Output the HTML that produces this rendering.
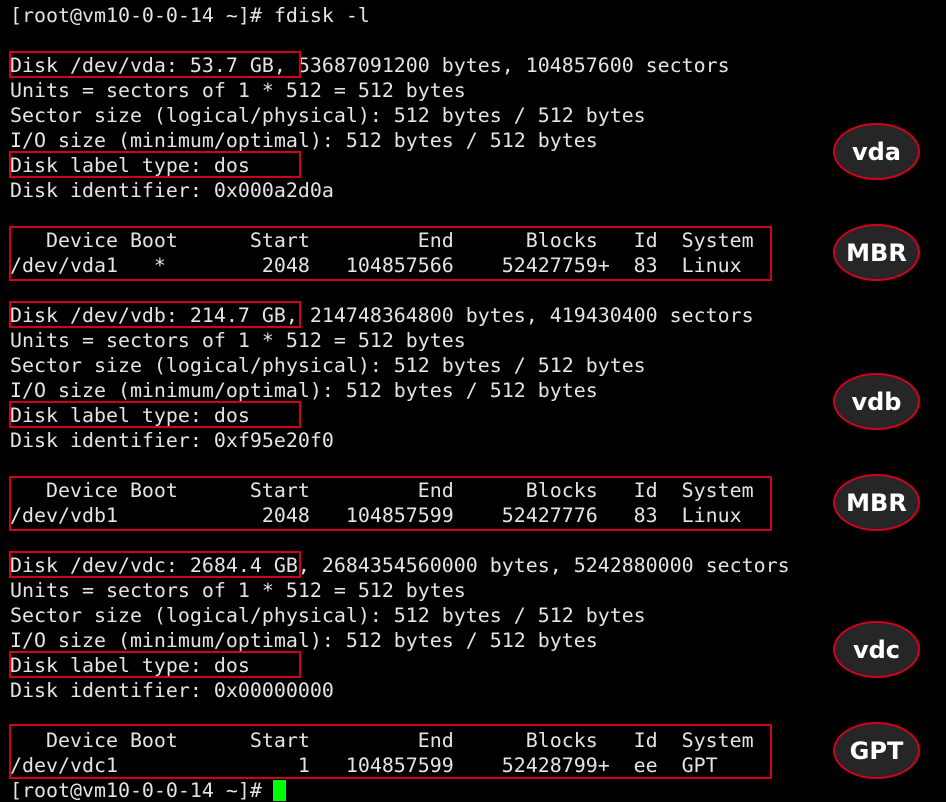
<!DOCTYPE html>
<html><head><meta charset="utf-8"><style>
html,body{margin:0;padding:0;background:#000;width:946px;height:802px;overflow:hidden;position:relative}
pre{position:absolute;left:10px;top:3px;margin:0;font-family:"DejaVu Sans Mono","Liberation Mono",monospace;font-size:19.93px;line-height:25px;color:#e4e4e4}
.b{position:absolute;border:2px solid #d0021b;box-sizing:border-box}
.e{position:absolute;width:87px;height:57px;border:2px solid #d0021b;border-radius:50%;background:#262626;box-sizing:border-box;color:#fff;font-family:"DejaVu Sans","Liberation Sans",sans-serif;font-weight:bold;font-size:24px;display:flex;align-items:center;justify-content:center}
.cur{position:absolute;left:273px;top:780px;width:13px;height:21px;background:#00ff00}
</style></head><body>
<pre>[root@vm10-0-0-14 ~]# fdisk -l

Disk /dev/vda: 53.7 GB, 53687091200 bytes, 104857600 sectors
Units = sectors of 1 * 512 = 512 bytes
Sector size (logical/physical): 512 bytes / 512 bytes
I/O size (minimum/optimal): 512 bytes / 512 bytes
Disk label type: dos
Disk identifier: 0x000a2d0a

   Device Boot      Start         End      Blocks   Id  System
/dev/vda1   *        2048   104857566    52427759+  83  Linux

Disk /dev/vdb: 214.7 GB, 214748364800 bytes, 419430400 sectors
Units = sectors of 1 * 512 = 512 bytes
Sector size (logical/physical): 512 bytes / 512 bytes
I/O size (minimum/optimal): 512 bytes / 512 bytes
Disk label type: dos
Disk identifier: 0xf95e20f0

   Device Boot      Start         End      Blocks   Id  System
/dev/vdb1            2048   104857599    52427776   83  Linux

Disk /dev/vdc: 2684.4 GB, 2684354560000 bytes, 5242880000 sectors
Units = sectors of 1 * 512 = 512 bytes
Sector size (logical/physical): 512 bytes / 512 bytes
I/O size (minimum/optimal): 512 bytes / 512 bytes
Disk label type: dos
Disk identifier: 0x00000000

   Device Boot      Start         End      Blocks   Id  System
/dev/vdc1               1   104857599    52428799+  ee  GPT
[root@vm10-0-0-14 ~]# </pre>
<div class="cur"></div>

<div class="b" style="left:9px;top:51px;width:292px;height:27px"></div>
<div class="b" style="left:9px;top:151px;width:292px;height:27px"></div>
<div class="b" style="left:9px;top:226px;width:763px;height:55px"></div>

<div class="b" style="left:9px;top:301px;width:292px;height:27px"></div>
<div class="b" style="left:9px;top:401px;width:292px;height:27px"></div>
<div class="b" style="left:9px;top:476px;width:763px;height:55px"></div>

<div class="b" style="left:9px;top:551px;width:292px;height:27px"></div>
<div class="b" style="left:9px;top:651px;width:292px;height:27px"></div>
<div class="b" style="left:9px;top:724px;width:763px;height:55px"></div>

<div class="e" style="left:833px;top:123px">vda</div>
<div class="e" style="left:833px;top:224px">MBR</div>
<div class="e" style="left:833px;top:373px">vdb</div>
<div class="e" style="left:833px;top:474px">MBR</div>
<div class="e" style="left:833px;top:621px">vdc</div>
<div class="e" style="left:833px;top:722px">GPT</div>
</body></html>
